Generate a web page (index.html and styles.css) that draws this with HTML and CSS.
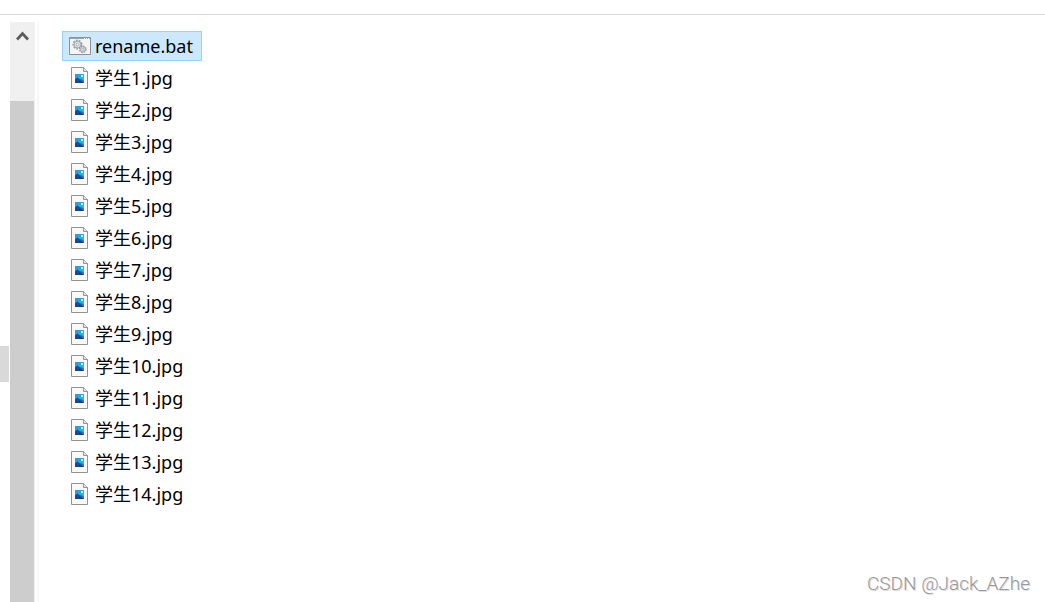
FILE: index.html
```html
<!DOCTYPE html>
<html lang="zh-CN">
<head>
<meta charset="utf-8">
<title>rename.bat</title>
<link rel="stylesheet" href="styles.css">
</head>
<body>
<svg class="defs" aria-hidden="true">
  <defs>
    <linearGradient id="sky" x1="0" y1="0" x2="1" y2="1"><stop offset="0" stop-color="#1a9be0"/><stop offset="1" stop-color="#2fc0f4"/></linearGradient>
    <linearGradient id="hill" x1="0" y1="0" x2="1" y2="1"><stop offset="0" stop-color="#12579f"/><stop offset="1" stop-color="#173a80"/></linearGradient>
  </defs>
  <symbol id="image-file" viewBox="0 0 22 22">
    <path d="M2.5 .5H14.5L18.5 4.5V21.5H2.5Z" fill="#f9f9f9" stroke="#929292"/>
    <path d="M14.5 .5V4.5H18.5" fill="#e8e8e8" stroke="#929292"/>
    <path d="M6 7H15V16H6Z" fill="url(#sky)"/>
    <path d="M6 12L8.500 10.500L11 12.500L12 12L15 14V16H6Z" fill="url(#hill)"/>
    <path d="M11 12.500L12 12L15 14V16Z" fill="#4a6fc0"/>
    <path d="M12 8H14V10H12Z" fill="#d4f1ff"/>
  </symbol>
  <symbol id="batch-file" viewBox="0 0 22 22">
    <path d="M.5 2.5H21.5V19.5H.5Z" fill="#f4f4f4" stroke="#8b9196"/>
    <path d="M1 3H21V4H1Z" fill="#9ca2a7"/>
    <path d="M15 3H16V4H15ZM17 3H18V4H17ZM19 3H20V4H19Z" fill="#fff"/>
    <g fill="#e4e7e9" stroke="#949a9f">
      <circle cx="8.500" cy="9.500" r="4" stroke-width="2" stroke-dasharray="1.7 1.1"/>
      <circle cx="8.500" cy="9.500" r="3.300" stroke-width=".7"/>
      <circle cx="8.500" cy="9.500" r="1.300" fill="#fff" stroke-width=".8"/>
      <circle cx="13.800" cy="14.300" r="3" stroke-width="1.700" stroke-dasharray="1.4 .95"/>
      <circle cx="13.800" cy="14.300" r="2.500" stroke-width=".7"/>
      <circle cx="13.800" cy="14.300" r="1" fill="#fff" stroke-width=".7"/>
    </g>
  </symbol>
</svg>
<header class="toolbar-edge"></header>
<main class="explorer">
  <aside class="tree-pane"><div class="tree-marker"></div></aside>
  <div class="scrollbar">
    <button class="scroll-up" type="button" aria-label="向上滚动">
      <svg width="13" height="12" viewBox="0 0 13 12"><path d="M1 9.500L6.500 3.500L12 9.500" fill="none" stroke="#5c5c5c" stroke-width="2.800"/></svg>
    </button>
    <div class="scroll-thumb"></div>
  </div>
  <section class="content">
    <ul class="files">
      <li><button type="button" class="file selected"><svg class="icon"><use href="#batch-file"/></svg>rename.bat</button></li>
      <li><button type="button" class="file"><svg class="icon"><use href="#image-file"/></svg>学生1.jpg</button></li>
      <li><button type="button" class="file"><svg class="icon"><use href="#image-file"/></svg>学生2.jpg</button></li>
      <li><button type="button" class="file"><svg class="icon"><use href="#image-file"/></svg>学生3.jpg</button></li>
      <li><button type="button" class="file"><svg class="icon"><use href="#image-file"/></svg>学生4.jpg</button></li>
      <li><button type="button" class="file"><svg class="icon"><use href="#image-file"/></svg>学生5.jpg</button></li>
      <li><button type="button" class="file"><svg class="icon"><use href="#image-file"/></svg>学生6.jpg</button></li>
      <li><button type="button" class="file"><svg class="icon"><use href="#image-file"/></svg>学生7.jpg</button></li>
      <li><button type="button" class="file"><svg class="icon"><use href="#image-file"/></svg>学生8.jpg</button></li>
      <li><button type="button" class="file"><svg class="icon"><use href="#image-file"/></svg>学生9.jpg</button></li>
      <li><button type="button" class="file"><svg class="icon"><use href="#image-file"/></svg>学生10.jpg</button></li>
      <li><button type="button" class="file"><svg class="icon"><use href="#image-file"/></svg>学生11.jpg</button></li>
      <li><button type="button" class="file"><svg class="icon"><use href="#image-file"/></svg>学生12.jpg</button></li>
      <li><button type="button" class="file"><svg class="icon"><use href="#image-file"/></svg>学生13.jpg</button></li>
      <li><button type="button" class="file"><svg class="icon"><use href="#image-file"/></svg>学生14.jpg</button></li>
    </ul>
    <p class="watermark">CSDN @Jack_AZhe</p>
  </section>
</main>
</body>
</html>
```
FILE: styles.css
```css
* { box-sizing: border-box; }

body {
  margin: 0;
  min-height: 100vh;
  display: flex;
  flex-direction: column;
  background: #fff;
  color: #000;
  font-family: "Noto Sans", "Noto Sans CJK SC", sans-serif;
  font-size: 18px;
  line-height: 24px;
}

.defs {
  position: absolute;
  width: 0;
  height: 0;
}

.toolbar-edge {
  height: 15px;
  border-bottom: 1px solid #d9d9d9;
}

.explorer {
  flex: 1;
  display: flex;
  padding-top: 7px;
}

.tree-pane {
  width: 10px;
  padding-top: 324px;
}

.tree-marker {
  width: 9px;
  height: 36px;
  background: #d9d9d9;
}

.scrollbar {
  width: 25px;
  display: flex;
  flex-direction: column;
  background: #f0f0f0;
}

.scroll-up {
  height: 79px;
  padding: 8px 0 0;
  display: flex;
  justify-content: center;
  align-items: flex-start;
  border: 0;
  background: none;
}

.scroll-thumb {
  flex: 1;
  margin-right: 1px;
  background: #cdcdcd;
}

.content {
  flex: 1;
  display: flex;
  flex-direction: column;
  justify-content: space-between;
  margin-left: 2px;
  padding: 9px 15px 4px 23px;
  border-left: 2px solid #f7f7f7;
}

.files {
  margin: 0;
  padding: 0;
  display: grid;
  gap: 2px;
  justify-items: start;
  list-style: none;
}

.file {
  height: 30px;
  padding: 0 8px 0 6px;
  display: flex;
  align-items: center;
  gap: 4px;
  border: 1px solid transparent;
  background: none;
  color: inherit;
  font: inherit;
}

.file.selected {
  border-color: #99d1ff;
  background: #cce8ff;
}

.icon {
  width: 22px;
  height: 22px;
}

.watermark {
  align-self: flex-end;
  margin: 0;
  color: #999;
  font-family: Roboto, "Liberation Sans", sans-serif;
  font-size: 19px;
  font-weight: 300;
  line-height: 28px;
  text-shadow: 1px 1px 0 #ddd;
}
```
